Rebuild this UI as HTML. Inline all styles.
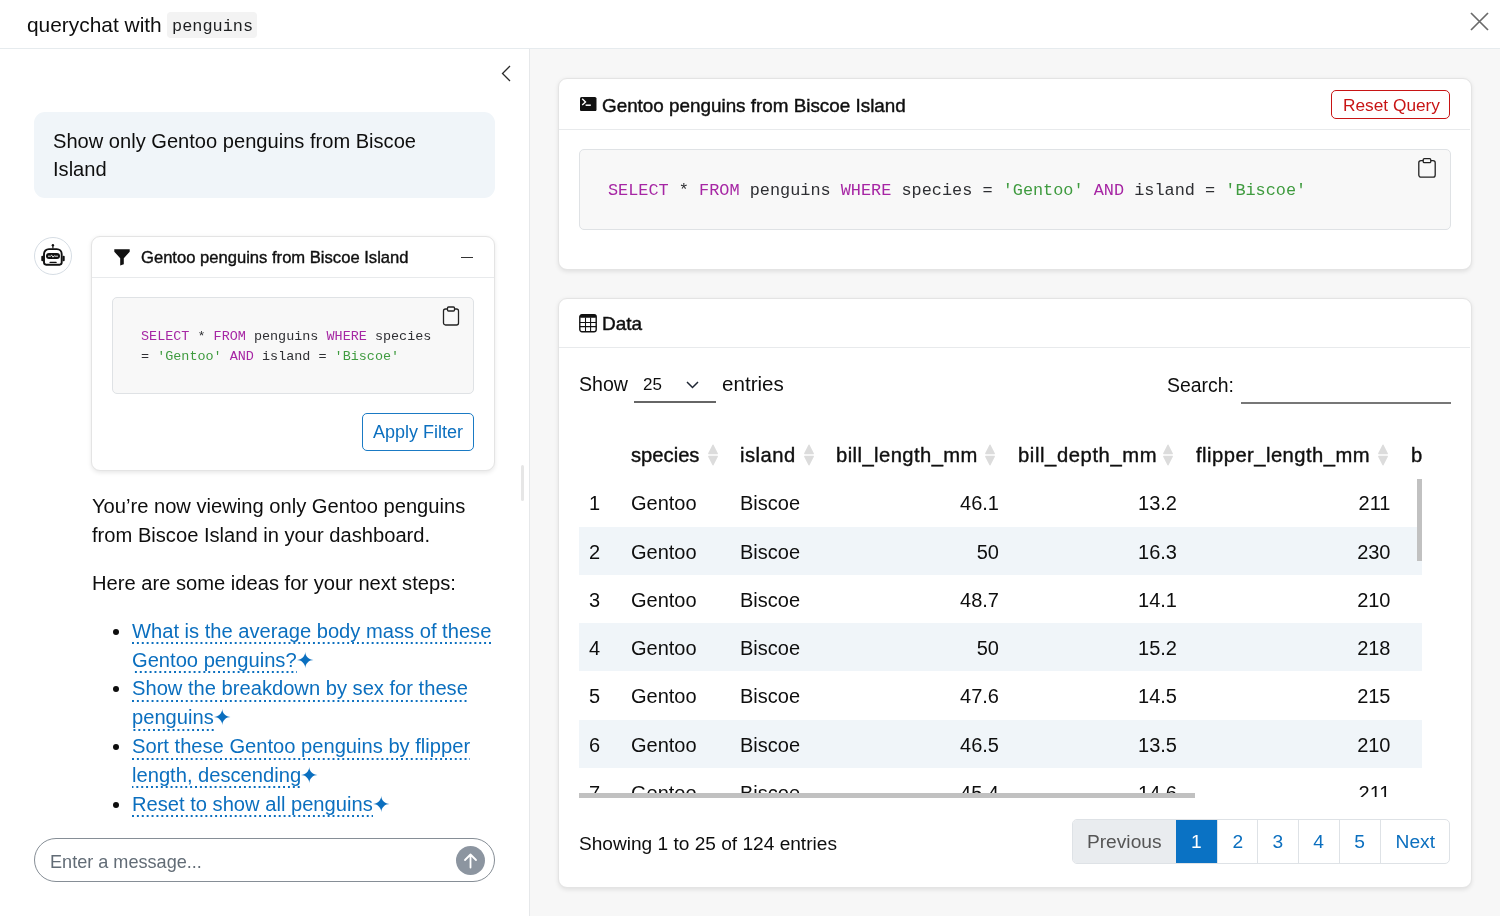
<!DOCTYPE html>
<html><head><meta charset="utf-8">
<style>
*{box-sizing:border-box;}
html,body{margin:0;padding:0;width:1500px;height:916px;overflow:hidden;background:#fff;}
#wrap{position:absolute;left:0;top:0;width:1500px;height:916px;will-change:transform;}
body{font-family:"Liberation Sans",sans-serif;color:#0e0e0e;position:relative;}
.abs{position:absolute;}
.mono{font-family:"Liberation Mono",monospace;}
#hdr{left:0;top:0;width:1500px;height:49px;border-bottom:1px solid #e6ebee;background:#fff;}
#title{left:27px;top:12px;font-size:20.9px;line-height:26px;white-space:nowrap;}
#title code{position:absolute;left:140px;top:0px;width:90px;height:26px;background:#f3f3f3;border-radius:4px;font-size:16.9px;line-height:29px;padding-left:5px;color:#1d1f21;}
#close{left:1470px;top:12px;width:19px;height:19px;}
#side{left:0;top:49px;width:530px;height:867px;border-right:1px solid #e6e8ea;background:#fff;}
#main{left:530px;top:49px;width:970px;height:867px;background:#f7f7f7;}
.card{position:absolute;background:#fff;border:1px solid #e4e4e4;border-radius:9px;box-shadow:0 1.5px 4px rgba(0,0,0,.09);}

#chev{left:501px;top:65px;width:10px;height:17px;}
#umsg{left:34px;top:112px;width:461px;height:86px;background:#f0f5f9;border-radius:11px;padding:14.5px 19px 0;font-size:20.1px;line-height:28.8px;}
#avatar{left:34px;top:237px;width:38px;height:38px;border:1px solid #d6dde4;border-radius:50%;}
#ccard{left:91px;top:236px;width:404px;height:235px;}
#ccard .hd{position:absolute;left:0;top:0;width:402px;height:41px;border-bottom:1px solid #e8eaec;}
#ccard .ttl{position:absolute;left:49px;top:11px;font-size:16.6px;font-weight:normal;-webkit-text-stroke:0.4px #161616;line-height:20px;white-space:nowrap;}
#ccard .minus{position:absolute;left:369px;top:19.5px;width:12px;height:1.6px;background:#333;}
.code{position:absolute;background:#f8f8f8;border:1px solid #dfe2e5;border-radius:5px;color:#2e2f33;}
.kw{color:#a626a4;}.st{color:#3f9b3f;}
#ccode{left:20px;top:60px;width:362px;height:97px;font-size:13.45px;line-height:20.3px;padding:28.5px 0 0 28px;white-space:pre;}
#apply{left:270px;top:176px;width:112px;height:38px;border:1px solid #1a7ac4;border-radius:5px;color:#0b6fbf;font-size:18px;line-height:36px;padding-left:10px;white-space:nowrap;}
#resp{left:92px;top:492px;width:410px;font-size:20.15px;line-height:28.8px;}
#resp p{margin:0 0 19.2px 0;}
#resp ul{margin:0;padding-left:40px;}
#resp li{margin:0;}
#resp a{color:#0b6fbf;text-decoration:none;background-image:linear-gradient(to right,#0b6fbf 45%,transparent 45%);background-size:4.9px 2px;background-repeat:repeat-x;background-position:0 100%;padding-bottom:2.6px;}
#resp .sp{color:#0b6fbf;font-size:21.5px;margin-left:-1px;position:relative;top:1px;}
#inp{left:34px;top:838px;width:461px;height:44px;border:1px solid #868e96;border-radius:22px;}
#inp .ph{position:absolute;left:15px;top:10px;font-size:18.1px;line-height:26px;color:#626c76;}
#send{left:456px;top:846px;width:29px;height:29px;border-radius:50%;background:#8c95a0;}
#sbar{left:521px;top:465px;width:3px;height:36px;background:#e6e6e6;border-radius:2px;}

#card1{left:558px;top:78px;width:914px;height:192px;}
#card1 .hd{position:absolute;left:0;top:0;width:911px;height:51px;border-bottom:1px solid #e8eaec;}
.ctitle{position:absolute;font-size:18.85px;font-weight:normal;-webkit-text-stroke:0.45px #161616;line-height:22px;white-space:nowrap;}
#reset{position:absolute;left:772px;top:11px;width:119px;height:29px;border:1px solid #c81414;border-radius:5px;color:#c81414;font-size:17.3px;line-height:29px;padding-left:11px;white-space:nowrap;}
#code1{left:20px;top:70px;width:872px;height:81px;font-size:16.86px;line-height:22px;padding:29.5px 0 0 28px;white-space:pre;}
#card2{left:558px;top:298px;width:914px;height:590px;}
#card2 .hd{position:absolute;left:0;top:0;width:911px;height:49px;border-bottom:1px solid #e8eaec;}
.t20{position:absolute;font-size:20px;line-height:26px;white-space:nowrap;}
.th{position:absolute;top:142.5px;font-size:20.2px;font-weight:normal;-webkit-text-stroke:0.4px #161616;line-height:26px;white-space:nowrap;}
.sort{position:absolute;top:145px;width:10px;height:22px;}
#tbody{position:absolute;left:20px;top:179.4px;width:843px;height:318.4px;overflow:hidden;}
.row{position:absolute;left:0;width:843px;height:48px;}
.row.s{background:#f0f5f9;}
.row div{position:absolute;top:12px;font-size:20px;line-height:26px;white-space:nowrap;}
.r{text-align:right;}
#hscroll{position:absolute;left:20px;top:494px;width:616px;height:5px;background:#c1c1c1;border-radius:0;}
#vscroll{position:absolute;left:858px;top:179.5px;width:4.5px;height:82px;background:#c1c1c1;}
#pager{position:absolute;left:513px;top:520px;width:378px;height:45px;border:1px solid #dee2e6;border-radius:5px;overflow:hidden;}
#pager div{position:absolute;top:0;height:43px;font-size:19.2px;line-height:43px;text-align:center;color:#0b6fbf;border-left:1px solid #dee2e6;}
</style></head><body><div id="wrap">
<div id="hdr" class="abs"></div>
<div id="title" class="abs">querychat with <code class="mono">penguins</code></div>
<svg id="close" class="abs" viewBox="0 0 19 19"><path d="M1 1L18 18M18 1L1 18" stroke="#6a6a6a" stroke-width="1.75"/></svg>
<div id="side" class="abs"></div>
<div id="main" class="abs"></div>

<svg id="chev" class="abs" viewBox="0 0 10 17"><path d="M9 1L1.5 8.5L9 16" fill="none" stroke="#2a2a2a" stroke-width="1.3"/></svg>
<div id="umsg" class="abs">Show only Gentoo penguins from Biscoe<br>Island</div>
<div id="avatar" class="abs"><svg style="position:absolute;left:6px;top:6px" width="24" height="24" viewBox="0 0 24 24"><circle cx="11.9" cy="1.3" r="1.2" fill="#111"/><path d="M11.9 1.5v3" stroke="#111" stroke-width="1.2"/><path d="M8 5.1h7.8a4.9 4.9 0 0 1 4.9 4.9v8.6a2.1 2.1 0 0 1-2.1 2.1H5.1a2.1 2.1 0 0 1-2.1-2.1V10a4.9 4.9 0 0 1 4.9-4.9z" fill="none" stroke="#111" stroke-width="1.9"/><rect x="0.3" y="11.8" width="2.2" height="5.4" rx="1" fill="#111"/><rect x="21.5" y="11.8" width="2.2" height="5.4" rx="1" fill="#111"/><rect x="5" y="9" width="14" height="6" rx="3" fill="#111"/><path d="M7 12.2h2.5l1.2-1 1.3 2 1.2-1.4 0.8 0.4h3" stroke="#fff" stroke-width="0.9" fill="none"/><path d="M9.1 18.4h6" stroke="#111" stroke-width="1.3" stroke-linecap="round"/></svg></div>
<div id="ccard" class="card">
 <div class="hd">
  <svg style="position:absolute;left:22px;top:12px" width="16" height="17" viewBox="0 0 16 17"><path d="M0.3 0.3h15.4v2.4L9.8 9.2v6L6.2 16.4V9.2L0.3 2.7z" fill="#111"/></svg>
  <div class="ttl">Gentoo penguins from Biscoe Island</div>
  <div class="minus"></div>
 </div>
 <div id="ccode" class="code mono"><span class="kw">SELECT</span> * <span class="kw">FROM</span> penguins <span class="kw">WHERE</span> species
= <span class="st">'Gentoo'</span> <span class="kw">AND</span> island = <span class="st">'Biscoe'</span></div>
 <svg style="position:absolute;left:350px;top:69px" width="18" height="20" viewBox="0 0 18 20"><rect x="1.5" y="3" width="15" height="16" rx="2" fill="none" stroke="#222" stroke-width="1.3"/><rect x="5.5" y="1" width="7" height="4" rx="1" fill="#f8f8f8" stroke="#222" stroke-width="1.3"/></svg>
 <div id="apply" class="abs">Apply Filter</div>
</div>
<div id="resp" class="abs">
<p>You’re now viewing only Gentoo penguins from Biscoe Island in your dashboard.</p>
<p>Here are some ideas for your next steps:</p>
<ul>
<li><a>What is the average body mass of these Gentoo penguins?</a><span class="sp">✦</span></li>
<li><a>Show the breakdown by sex for these penguins</a><span class="sp">✦</span></li>
<li><a>Sort these Gentoo penguins by flipper length, descending</a><span class="sp">✦</span></li>
<li><a>Reset to show all penguins</a><span class="sp">✦</span></li>
</ul>
</div>
<div id="sbar" class="abs"></div>
<div id="inp" class="abs"><div class="ph">Enter a message...</div></div>
<div id="send" class="abs"><svg style="position:absolute;left:6px;top:6px" width="17" height="17" viewBox="0 0 17 17"><path d="M8.5 15.5V2.5M3 8l5.5-5.5L14 8" fill="none" stroke="#fff" stroke-width="1.8" stroke-linecap="round" stroke-linejoin="round"/></svg></div>

<div id="card1" class="card">
 <div class="hd">
  <svg style="position:absolute;left:21px;top:18px" width="16.5" height="14.2" viewBox="0 0 16.5 14.2"><rect x="0" y="0" width="16.5" height="14.2" rx="1.6" fill="#111"/><path d="M2.2 1.8l3.3 3.1-3.3 3.1" fill="none" stroke="#fff" stroke-width="1.4"/><path d="M5.6 8.2h5.2" stroke="#fff" stroke-width="1.5"/></svg>
  <div class="ctitle" style="left:43px;top:16px">Gentoo penguins from Biscoe Island</div>
  <div id="reset">Reset Query</div>
 </div>
 <div id="code1" class="code mono"><span class="kw">SELECT</span> * <span class="kw">FROM</span> penguins <span class="kw">WHERE</span> species = <span class="st">'Gentoo'</span> <span class="kw">AND</span> island = <span class="st">'Biscoe'</span></div>
 <svg style="position:absolute;left:859px;top:79px" width="18" height="20" viewBox="0 0 18 20"><rect x="0.8" y="2.6" width="16.4" height="16.6" rx="2.2" fill="none" stroke="#222" stroke-width="1.3"/><rect x="5.2" y="0.7" width="7.6" height="4" rx="1.2" fill="#f8f8f8" stroke="#222" stroke-width="1.3"/></svg>
</div>
<div id="card2" class="card">
 <div class="hd">
  <svg style="position:absolute;left:20px;top:15px" width="18" height="19" viewBox="0 0 18 19"><rect x="0.8" y="0.8" width="16.4" height="16.9" rx="2.2" fill="none" stroke="#111" stroke-width="1.4"/><rect x="0.8" y="0.8" width="16.4" height="3" rx="1" fill="#111"/><path d="M0.8 8.4h16.4M0.8 12.6h16.4M6.5 3.6v14M11.6 3.6v14" stroke="#111" stroke-width="1.05"/></svg>
  <div class="ctitle" style="left:43px;top:14px;font-size:19px">Data</div>
 </div>
 <div class="t20" style="left:20px;top:72px;font-size:19.6px">Show</div>
 <div style="position:absolute;left:75px;top:102px;width:82px;height:1.6px;background:#666"></div>
 <div class="t20" style="left:84px;top:73px;font-size:17px">25</div>
 <svg style="position:absolute;left:127px;top:82px" width="13" height="8" viewBox="0 0 13 8"><path d="M1 1l5.5 5.5L12 1" fill="none" stroke="#1e2533" stroke-width="1.45"/></svg>
 <div class="t20" style="left:163px;top:72px;font-size:20.6px">entries</div>
 <div class="t20" style="left:608px;top:72.5px;font-size:19.4px">Search:</div>
 <div style="position:absolute;left:682px;top:103px;width:210px;height:2px;background:#777"></div>
 <div class="th" style="left:72px">species</div><svg class="sort" style="left:149px" viewBox="0 0 10 22"><path d="M5 1.2L9.2 9.6H0.8z" fill="#dcdcdc" stroke="#dcdcdc" stroke-width="1.4" stroke-linejoin="round"/><path d="M5 20.8L9.2 12.4H0.8z" fill="#dcdcdc" stroke="#dcdcdc" stroke-width="1.4" stroke-linejoin="round"/></svg>
 <div class="th" style="left:181px;letter-spacing:0.5px">island</div><svg class="sort" style="left:245px" viewBox="0 0 10 22"><path d="M5 1.2L9.2 9.6H0.8z" fill="#dcdcdc" stroke="#dcdcdc" stroke-width="1.4" stroke-linejoin="round"/><path d="M5 20.8L9.2 12.4H0.8z" fill="#dcdcdc" stroke="#dcdcdc" stroke-width="1.4" stroke-linejoin="round"/></svg>
 <div class="th" style="left:277px;letter-spacing:0.43px">bill_length_mm</div><svg class="sort" style="left:426px" viewBox="0 0 10 22"><path d="M5 1.2L9.2 9.6H0.8z" fill="#dcdcdc" stroke="#dcdcdc" stroke-width="1.4" stroke-linejoin="round"/><path d="M5 20.8L9.2 12.4H0.8z" fill="#dcdcdc" stroke="#dcdcdc" stroke-width="1.4" stroke-linejoin="round"/></svg>
 <div class="th" style="left:459px;letter-spacing:0.6px">bill_depth_mm</div><svg class="sort" style="left:604px" viewBox="0 0 10 22"><path d="M5 1.2L9.2 9.6H0.8z" fill="#dcdcdc" stroke="#dcdcdc" stroke-width="1.4" stroke-linejoin="round"/><path d="M5 20.8L9.2 12.4H0.8z" fill="#dcdcdc" stroke="#dcdcdc" stroke-width="1.4" stroke-linejoin="round"/></svg>
 <div class="th" style="left:637px;letter-spacing:0.47px">flipper_length_mm</div><svg class="sort" style="left:819px" viewBox="0 0 10 22"><path d="M5 1.2L9.2 9.6H0.8z" fill="#dcdcdc" stroke="#dcdcdc" stroke-width="1.4" stroke-linejoin="round"/><path d="M5 20.8L9.2 12.4H0.8z" fill="#dcdcdc" stroke="#dcdcdc" stroke-width="1.4" stroke-linejoin="round"/></svg>
 <div class="th" style="left:852px">b</div>
 <div id="tbody"><div class="row" style="top:0.00px;height:48.24px"><div style="left:10px">1</div><div style="left:52px">Gentoo</div><div style="left:161px">Biscoe</div><div class="r" style="right:423px">46.1</div><div class="r" style="right:245px">13.2</div><div class="r" style="right:31.5px">211</div></div><div class="row s" style="top:48.24px;height:48.24px"><div style="left:10px">2</div><div style="left:52px">Gentoo</div><div style="left:161px">Biscoe</div><div class="r" style="right:423px">50</div><div class="r" style="right:245px">16.3</div><div class="r" style="right:31.5px">230</div></div><div class="row" style="top:96.48px;height:48.24px"><div style="left:10px">3</div><div style="left:52px">Gentoo</div><div style="left:161px">Biscoe</div><div class="r" style="right:423px">48.7</div><div class="r" style="right:245px">14.1</div><div class="r" style="right:31.5px">210</div></div><div class="row s" style="top:144.72px;height:48.24px"><div style="left:10px">4</div><div style="left:52px">Gentoo</div><div style="left:161px">Biscoe</div><div class="r" style="right:423px">50</div><div class="r" style="right:245px">15.2</div><div class="r" style="right:31.5px">218</div></div><div class="row" style="top:192.96px;height:48.24px"><div style="left:10px">5</div><div style="left:52px">Gentoo</div><div style="left:161px">Biscoe</div><div class="r" style="right:423px">47.6</div><div class="r" style="right:245px">14.5</div><div class="r" style="right:31.5px">215</div></div><div class="row s" style="top:241.20px;height:48.24px"><div style="left:10px">6</div><div style="left:52px">Gentoo</div><div style="left:161px">Biscoe</div><div class="r" style="right:423px">46.5</div><div class="r" style="right:245px">13.5</div><div class="r" style="right:31.5px">210</div></div><div class="row" style="top:289.44px;height:48.24px"><div style="left:10px">7</div><div style="left:52px">Gentoo</div><div style="left:161px">Biscoe</div><div class="r" style="right:423px">45.4</div><div class="r" style="right:245px">14.6</div><div class="r" style="right:31.5px">211</div></div></div>
 <div id="hscroll"></div>
 <div id="vscroll"></div>
 <div class="t20" style="left:20px;top:532px;font-size:19.1px">Showing 1 to 25 of 124 entries</div>
 <div id="pager">
  <div style="left:0;width:102.5px;background:#e9ecef;color:#555;border-left:none">Previous</div>
  <div style="left:102.5px;width:41.8px;background:#0a72c4;color:#fff;border-left:none">1</div>
  <div style="left:144.3px;width:39.9px">2</div>
  <div style="left:184.2px;width:40.3px">3</div>
  <div style="left:224.5px;width:41.3px">4</div>
  <div style="left:265.8px;width:40.8px">5</div>
  <div style="left:306.6px;width:70.4px">Next</div>
 </div>
</div>
</div></body></html>
